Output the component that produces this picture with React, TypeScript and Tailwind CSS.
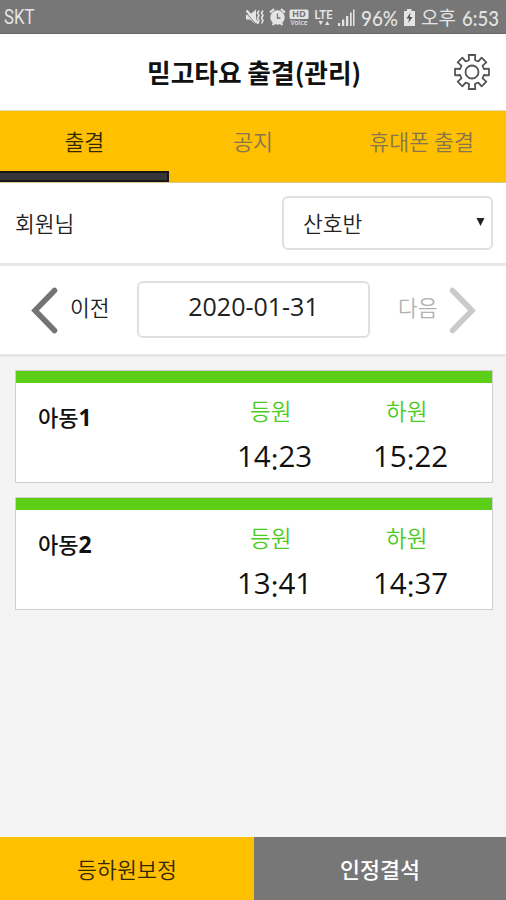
import React from "react";

const kr = "font-['Noto_Sans_CJK_KR',sans-serif]";
const latin = "font-['Open_Sans',sans-serif]";

function StatusIcons() {
  return (
    <svg width="172" height="34" viewBox="244 0 172 34" className="block shrink-0" fill="#e4e4e4">
      {/* muted speaker with vibration marks */}
      <path d="M246 14.500h4l6-5v15l-6-5h-4z" />
      <path d="M246.500 10.500l12 13" stroke="#e4e4e4" strokeWidth="2.400" />
      <path d="M245.500 12.500l11 12" stroke="#777" strokeWidth="1" />
      <path d="M259 10.500l-1.500 2.500 1.500 2.500-1.500 2.500 1.500 2.500-1.500 3M263 10.500l-1.500 2.500 1.500 2.500-1.500 2.500 1.500 2.500-1.500 3" fill="none" stroke="#e4e4e4" strokeWidth="1.600" />
      {/* alarm clock */}
      <circle cx="277.500" cy="17.500" r="7.200" />
      <path d="M270 12.500l4-3.500M285 12.500l-4-3.500M272.500 25l2-2M282.500 25l-2-2" stroke="#e4e4e4" strokeWidth="2.200" />
      <path d="M277.500 13.500v4.500h3" fill="none" stroke="#777" strokeWidth="1.300" />
      {/* HD voice */}
      <rect x="289.500" y="9.500" width="19" height="9.500" rx="1.500" />
      <text x="299" y="17.300" textAnchor="middle" fontFamily="Open Sans, sans-serif" fontSize="8.500" fontWeight="700" fill="#777" textLength="14" lengthAdjust="spacingAndGlyphs">HD</text>
      <text x="299" y="25" textAnchor="middle" fontFamily="Open Sans, sans-serif" fontSize="7" fontWeight="600" textLength="17" lengthAdjust="spacingAndGlyphs">Voice</text>
      {/* LTE */}
      <text x="323.500" y="18.500" textAnchor="middle" fontFamily="Roboto, sans-serif" fontSize="13" fontWeight="600" textLength="18" lengthAdjust="spacingAndGlyphs">LTE</text>
      <path d="M318.500 21h4.500l-2.200 4zM325 25h4.500l-2.200-4z" />
      {/* signal strength */}
      <path d="M338 23h2.200v3H338zM342 19.500h2.300V26H342zM346 16h2.300v10H346zM350 12.500h1.700V26H350zM353 9.500h1.500V26H353z" />
      <text x="361" y="25.500" fontFamily="Lato, sans-serif" fontSize="22" fontWeight="500" textLength="37" lengthAdjust="spacingAndGlyphs">96%</text>
      {/* charging battery */}
      <path d="M407 9h4.500v2h3.500v15h-11V11h3z" />
      <path d="M410.500 12.500l-4 6h2.700l-1 4.500 4.300-6h-2.700z" fill="#555" />
    </svg>
  );
}

function GearIcon() {
  const teeth = [0, 45, 90, 135, 180, 225, 270, 315];
  const points: string[] = [];
  teeth.forEach((deg) => {
    const polar = (radius: number, offset: number) => {
      const a = ((deg + offset - 90) * Math.PI) / 180;
      return `${(19 + radius * Math.cos(a)).toFixed(2)},${(19 + radius * Math.sin(a)).toFixed(2)}`;
    };
    points.push(polar(12.300, -14), polar(17.300, -11), polar(17.300, 11), polar(12.300, 14));
  });
  return (
    <svg width="38" height="38" viewBox="0 0 38 38" fill="none" stroke="#555" strokeWidth="1.800" strokeLinejoin="round">
      <polygon points={points.join(" ")} />
      <circle cx="19" cy="19" r="6.500" />
    </svg>
  );
}

function Chevron({ left }: { left?: boolean }) {
  return (
    <svg width="28" height="48" viewBox="0 0 28 48" fill="none" strokeWidth="5.500" strokeLinecap="round" strokeLinejoin="miter" stroke={left ? "#737373" : "#cacaca"}>
      <path d={left ? "M24.500 4.500L5 24.500l19.500 20" : "M3.500 4.500L23 24.500l-19.500 20"} />
    </svg>
  );
}

function Time({ value }: { value: string }) {
  const [h, m] = value.split(":");
  return (
    <div className={`${latin} mt-[9px] h-[42px] text-[29.5px] font-normal leading-[42px] text-[#111]`}>
      {h}
      <span className="relative top-[3px]">:</span>
      {m}
    </div>
  );
}

function Card({ name, num, arrive, leave }: { name: string; num: string; arrive: string; leave: string }) {
  return (
    <section className="h-[113px] border border-[#cfcfcf] bg-white">
      <div className="h-[12px] bg-[#5dce16]" />
      <div className="flex h-[99px]">
        <div className="w-[221px] pl-[22px] pt-[17px] text-[22px] font-medium leading-[32px] text-[#111]">
          {name}
          <span className={`${latin} text-[23px] font-bold`}>{num}</span>
        </div>
        <div className="w-[136px]">
          <div className="pl-[13px] pt-[11px] text-[22.500px] leading-[32px] text-[#4ccb20]">등원</div>
          <Time value={arrive} />
        </div>
        <div>
          <div className="pl-[13px] pt-[11px] text-[22.500px] leading-[32px] text-[#4ccb20]">하원</div>
          <Time value={leave} />
        </div>
      </div>
    </section>
  );
}

export default function App() {
  return (
    <div className={`${kr} flex h-[900px] w-[506px] flex-col overflow-hidden whitespace-nowrap bg-[#f4f4f4] font-[350] text-[#222]`}>
      <div className="flex h-[34px] shrink-0 border-b border-[#666] bg-[#777] text-[#e4e4e4]">
        <div className="w-[244px] pl-[4px] pt-[6px] font-['Roboto',sans-serif] text-[19.500px] font-normal leading-[24px]">
          <span className="inline-block origin-left scale-x-[0.86]">SKT</span>
        </div>
        <StatusIcons />
        <div className="w-[46px] pl-[5px] pt-[4px] text-[19px] font-normal leading-[26px]">오후</div>
        <svg width="44" height="33" viewBox="0 0 44 33">
          <text x="0" y="25.500" fill="#e4e4e4" fontFamily="Lato, sans-serif" fontSize="22" fontWeight="500" textLength="37" lengthAdjust="spacingAndGlyphs">6:53</text>
        </svg>
      </div>

      <header className="flex h-[77px] shrink-0 items-center border-b border-[#e5dcc0] bg-white">
        <h1 className="w-[453px] pl-[147px] text-[25.700px] font-bold leading-[40px] text-[#111]">믿고타요 출결(관리)</h1>
        <GearIcon />
      </header>

      <nav className="grid h-[72px] shrink-0 grid-cols-3 border-b border-[#d9c78a] bg-[#ffc000] text-center text-[21.700px] leading-[32px] text-[#857550]">
        <div className="flex flex-col justify-between pt-[14px] text-[#33290a]">
          <span>출결</span>
          <span className="h-[11px] border-2 border-l-0 border-[#171717] bg-[#36353a]" />
        </div>
        <div className="pt-[14px]">공지</div>
        <div className="pt-[14px]">휴대폰 출결</div>
      </nav>

      <div className="flex h-[83px] shrink-0 items-start justify-between border-b-[3px] border-[#e7e7e7] bg-white pl-[15px] pr-[13px] pt-[13px]">
        <div className="pt-[11px] text-[21.500px] leading-[32px]">회원님</div>
        <div className="flex h-[54px] w-[211px] items-center justify-between rounded-[6px] border-2 border-[#e0e0e0] pl-[19px] pr-[6px] text-[21.500px] leading-[32px]">
          <span>산호반</span>
          <svg width="9" height="8" viewBox="0 0 9 8" className="mb-0.5"><path d="M.5 0h8l-4 8z" fill="#222" /></svg>
        </div>
      </div>

      <div className="flex h-[91px] shrink-0 items-start border-b-[3px] border-[#e7e7e7] bg-white pl-[30px] pt-[15px]">
        <div className="pt-[5px]"><Chevron left /></div>
        <div className="w-[79px] pl-[12px] pt-[10px] text-[21.500px] leading-[32px]">이전</div>
        <div className={`${latin} h-[57px] w-[233px] rounded-[6px] border-2 border-[#e0e0e0] text-center text-[25px] font-normal leading-[47px]`}>2020-01-31</div>
        <div className="w-[79px] pl-[28px] pt-[10px] text-[21.500px] leading-[32px] text-[#b2b2b2]">다음</div>
        <div className="pt-[5px]"><Chevron /></div>
      </div>

      <main className="flex grow flex-col gap-[14px] pl-[15px] pr-[13px] pt-[13px]">
        <Card name="아동" num="1" arrive="14:23" leave="15:22" />
        <Card name="아동" num="2" arrive="13:41" leave="14:37" />
      </main>

      <footer className="flex h-[63px] shrink-0 text-center text-[21.700px] leading-[64px]">
        <div className="w-[254px] bg-[#ffc000] text-[#33290a]">등하원보정</div>
        <div className="grow bg-[#777] font-medium text-white">인정결석</div>
      </footer>
    </div>
  );
}
